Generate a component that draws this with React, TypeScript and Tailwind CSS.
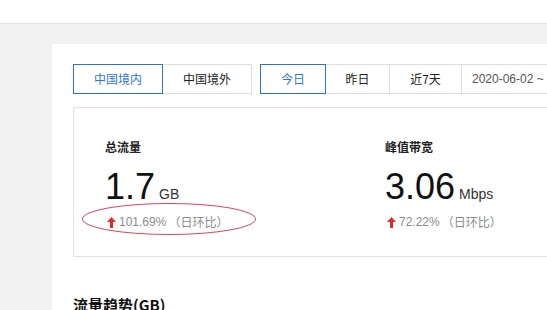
const cn = { fontFamily: '"Noto Sans CJK SC", "Liberation Sans", sans-serif' };
const num = { fontFamily: '"Liberation Sans", Arial, sans-serif' };

function Trend({ value }: { value: string }) {
  return (
    <div className="flex items-center h-[16px] text-[12px] text-[#8c8c8c]" style={num}>
      <svg width="9" height="11" viewBox="0 0 9 11" className="ml-[2px] mr-[3px]">
        <path d="M4.5 0 L9 5 H6 V11 H3 V5 H0 Z" fill="#e02b2b" />
      </svg>
      <span>{value}</span>
      <span style={cn} className="ml-[2px]">（日环比）</span>
    </div>
  );
}

function Stat({ title, value, unit, trend }: { title: string; value: string; unit: string; trend: string }) {
  return (
    <div>
      <div className="text-[12px] font-bold text-[#222] leading-[16px]" style={cn}>{title}</div>
      <div className="flex items-baseline mt-[18px] leading-[28px]" style={num}>
        <span className="text-[36px] text-[#111]">{value}</span>
        <span className="text-[14px] text-[#333] ml-[4px]">{unit}</span>
      </div>
      <div className="mt-[6px]">
        <Trend value={trend} />
      </div>
    </div>
  );
}

export default function App() {
  return (
    <div className="w-[547px] h-[310px] overflow-hidden bg-[#f2f2f2]">
      <div className="h-[24px] bg-white border-b border-[#e3e3e3]"></div>
      <div className="ml-[52px] mt-[20px] w-[600px] h-[300px] bg-white pt-[20px] pl-[21px]">
        <div className="flex h-[30px] text-[12px]" style={cn}>
          <div className="flex">
            <div className="relative z-10 w-[90px] flex items-center justify-center border border-[#2a72d4] text-[#2f76d6]">中国境内</div>
            <div className="w-[90px] -ml-px flex items-center justify-center border border-[#dedede] text-[#222]">中国境外</div>
          </div>
          <div className="flex ml-[8px]">
            <div className="relative z-10 w-[66px] flex items-center justify-center border border-[#2a72d4] text-[#2f76d6]">今日</div>
            <div className="w-[65px] -ml-px flex items-center justify-center border border-[#dedede] text-[#222]">昨日</div>
            <div className="w-[73px] -ml-px flex items-center justify-center border border-[#dedede] text-[#222]">近7天</div>
            <div className="w-[120px] -ml-px flex items-center pl-[10px] border border-[#dedede] text-[#555] text-[12px]" style={num}>2020-06-02 ~</div>
          </div>
        </div>
        <div className="relative mt-[13px] w-[560px] h-[150px] border border-[#e2e2e2] flex pl-[31px] pt-[31px]">
          <div className="w-[280px]">
            <Stat title="总流量" value="1.7" unit="GB" trend="101.69%" />
          </div>
          <div>
            <Stat title="峰值带宽" value="3.06" unit="Mbps" trend="72.22%" />
          </div>
          <svg className="absolute left-[7px] top-[94px]" width="176" height="34" viewBox="0 0 176 34">
            <ellipse cx="88" cy="17" rx="86.5" ry="15.5" fill="none" stroke="#d9445e" strokeWidth="1" />
          </svg>
        </div>
        <div className="mt-[38px] text-[15px] font-bold text-[#111] leading-[20px]" style={cn}>流量趋势(GB)</div>
      </div>
    </div>
  );
}
